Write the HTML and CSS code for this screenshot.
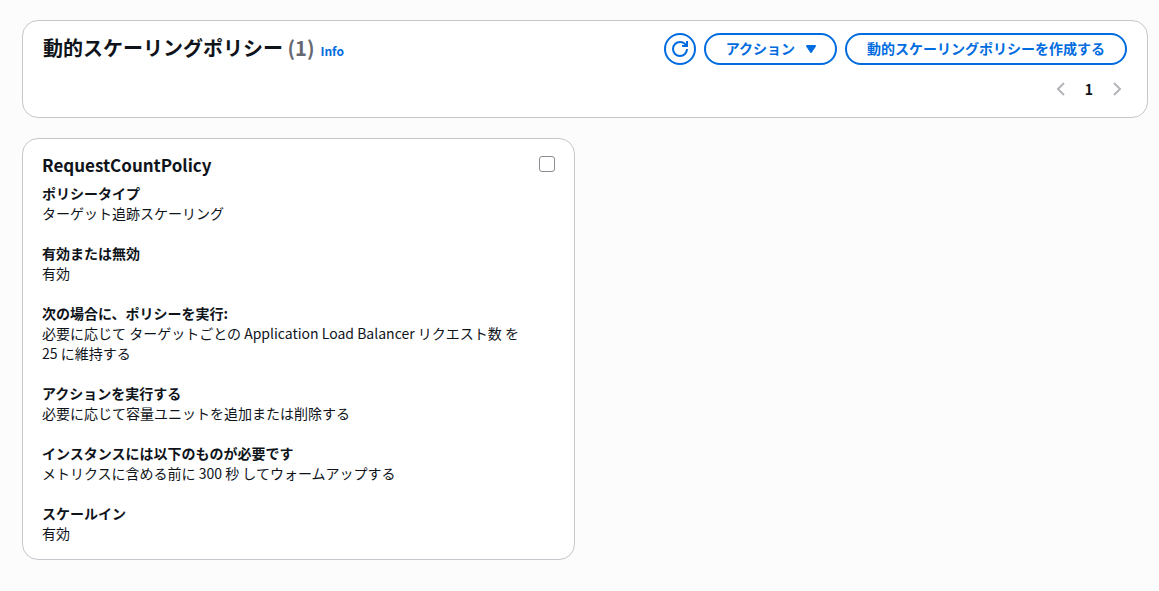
FILE: index.html
```html
<!DOCTYPE html>
<html lang="ja">
<head>
  <meta charset="UTF-8" />
  <meta name="viewport" content="width=device-width, initial-scale=1.0"/>
  <title>動的スケーリングポリシー</title>
  <link rel="stylesheet" href="styles.css">
</head>
<body>

<main class="page">
  <header class="panel-header">
    <div class="header-row">
      <div class="heading">
        <h2>動的スケーリングポリシー <span class="counter">(1)</span></h2>
        <a class="info-link" href="#info">Info</a>
      </div>
      <div class="actions">
        <button class="btn btn-icon" type="button" aria-label="更新">
          <svg width="16" height="16" viewBox="0 0 16 16" fill="none" stroke="currentColor" stroke-width="2">
            <path d="M15 8c0 3.900-3.100 7-7 7s-7-3.100-7-7 3.100-7 7-7c2.800 0 5.200 1.600 6.300 4"/>
            <path d="M15 0v5h-5"/>
          </svg>
        </button>
        <button class="btn btn-menu" type="button">
          アクション
          <svg width="16" height="16" viewBox="0 0 16 16" fill="currentColor" stroke="currentColor" stroke-width="2" stroke-linejoin="round">
            <path d="M4 6h8l-4 6z"/>
          </svg>
        </button>
        <button class="btn" type="button">動的スケーリングポリシーを作成する</button>
      </div>
    </div>
    <nav class="pagination" aria-label="ページ">
      <button class="page-arrow" type="button" aria-label="前へ" disabled>
        <svg width="16" height="16" viewBox="0 0 16 16" fill="none" stroke="currentColor" stroke-width="2">
          <path d="M11 2L5 8l6 6"/>
        </svg>
      </button>
      <button class="page-number" type="button" aria-current="page">1</button>
      <button class="page-arrow" type="button" aria-label="次へ" disabled>
        <svg width="16" height="16" viewBox="0 0 16 16" fill="none" stroke="currentColor" stroke-width="2">
          <path d="M5 2l6 6-6 6"/>
        </svg>
      </button>
    </nav>
  </header>

  <div class="cards">
    <section class="card">
      <div class="card-header">
        <h3><label for="policy1">RequestCountPolicy</label></h3>
        <input type="checkbox" id="policy1" />
      </div>
      <dl class="details">
        <div>
          <dt>ポリシータイプ</dt>
          <dd>ターゲット追跡スケーリング</dd>
        </div>
        <div>
          <dt>有効または無効</dt>
          <dd>有効</dd>
        </div>
        <div>
          <dt>次の場合に、ポリシーを実行:</dt>
          <dd>必要に応じて ターゲットごとの Application Load Balancer リクエスト数 を 25 に維持する</dd>
        </div>
        <div>
          <dt>アクションを実行する</dt>
          <dd>必要に応じて容量ユニットを追加または削除する</dd>
        </div>
        <div>
          <dt>インスタンスには以下のものが必要です</dt>
          <dd>メトリクスに含める前に 300 秒 してウォームアップする</dd>
        </div>
        <div>
          <dt>スケールイン</dt>
          <dd>有効</dd>
        </div>
      </dl>
    </section>
  </div>
</main>

</body>
</html>
```
FILE: styles.css
```css
* {
  box-sizing: border-box;
}
body {
  font-family: "Noto Sans CJK JP", sans-serif;
  font-size: 14px;
  line-height: 20px;
  color: #0f141a;
  background-color: #fcfcfd;
  margin: 0;
}
h2, h3, dl, dd {
  margin: 0;
}
button {
  font-family: inherit;
  font-size: 14px;
  line-height: 20px;
  font-weight: bold;
  cursor: pointer;
}
svg {
  display: block;
}
.page {
  display: flex;
  flex-direction: column;
  gap: 20px;
  padding: 20px 11px 20px 22px;
}
.panel-header, .card {
  background-color: white;
  border: 1px solid #c6c6cd;
  border-radius: 16px;
}
.panel-header {
  padding: 12px 20px 18px;
}
.header-row {
  display: flex;
  justify-content: space-between;
  align-items: center;
}
.heading {
  display: flex;
  align-items: baseline;
  gap: 6px;
  padding-bottom: 2px;
}
.heading h2 {
  font-size: 20px;
  line-height: 24px;
}
.counter {
  color: #656871;
}
.info-link {
  color: #006ce0;
  font-size: 12px;
  font-weight: bold;
  text-decoration: none;
}
.actions {
  display: flex;
  gap: 8px;
}
.btn {
  display: flex;
  align-items: center;
  gap: 8px;
  height: 32px;
  padding: 0 20px 2px;
  color: #006ce0;
  background-color: white;
  border: 2px solid #006ce0;
  border-radius: 16px;
}
.btn:hover {
  background-color: #f0fbff;
}
.btn-icon {
  width: 32px;
  padding: 0;
  justify-content: center;
}
.btn-menu {
  padding-right: 16px;
}
.pagination {
  display: flex;
  justify-content: flex-end;
  align-items: center;
  gap: 16px;
  margin-top: 14px;
  padding-right: 2px;
}
.pagination button {
  padding: 0;
  border: 0;
  background: none;
}
.page-arrow {
  color: #b4b4bb;
}
.page-number {
  color: #0f141a;
}
.cards {
  display: grid;
  grid-template-columns: 1fr 1fr;
  gap: 20px;
}
.card {
  padding: 14px 19px 16px;
}
.card-header {
  display: flex;
  justify-content: space-between;
  align-items: flex-start;
  margin-bottom: 6px;
}
.card-header h3 {
  font-size: 17px;
  line-height: 24px;
}
.card-header input {
  appearance: none;
  width: 16px;
  height: 16px;
  margin: 3px 0 0;
  border: 1px solid #8c8c94;
  border-radius: 3px;
  background-color: white;
}
.card-header input:checked {
  background-color: #006ce0;
  border-color: #006ce0;
}
.details {
  display: flex;
  flex-direction: column;
  gap: 20px;
  padding-right: 20px;
}
dt {
  font-weight: bold;
}
```
